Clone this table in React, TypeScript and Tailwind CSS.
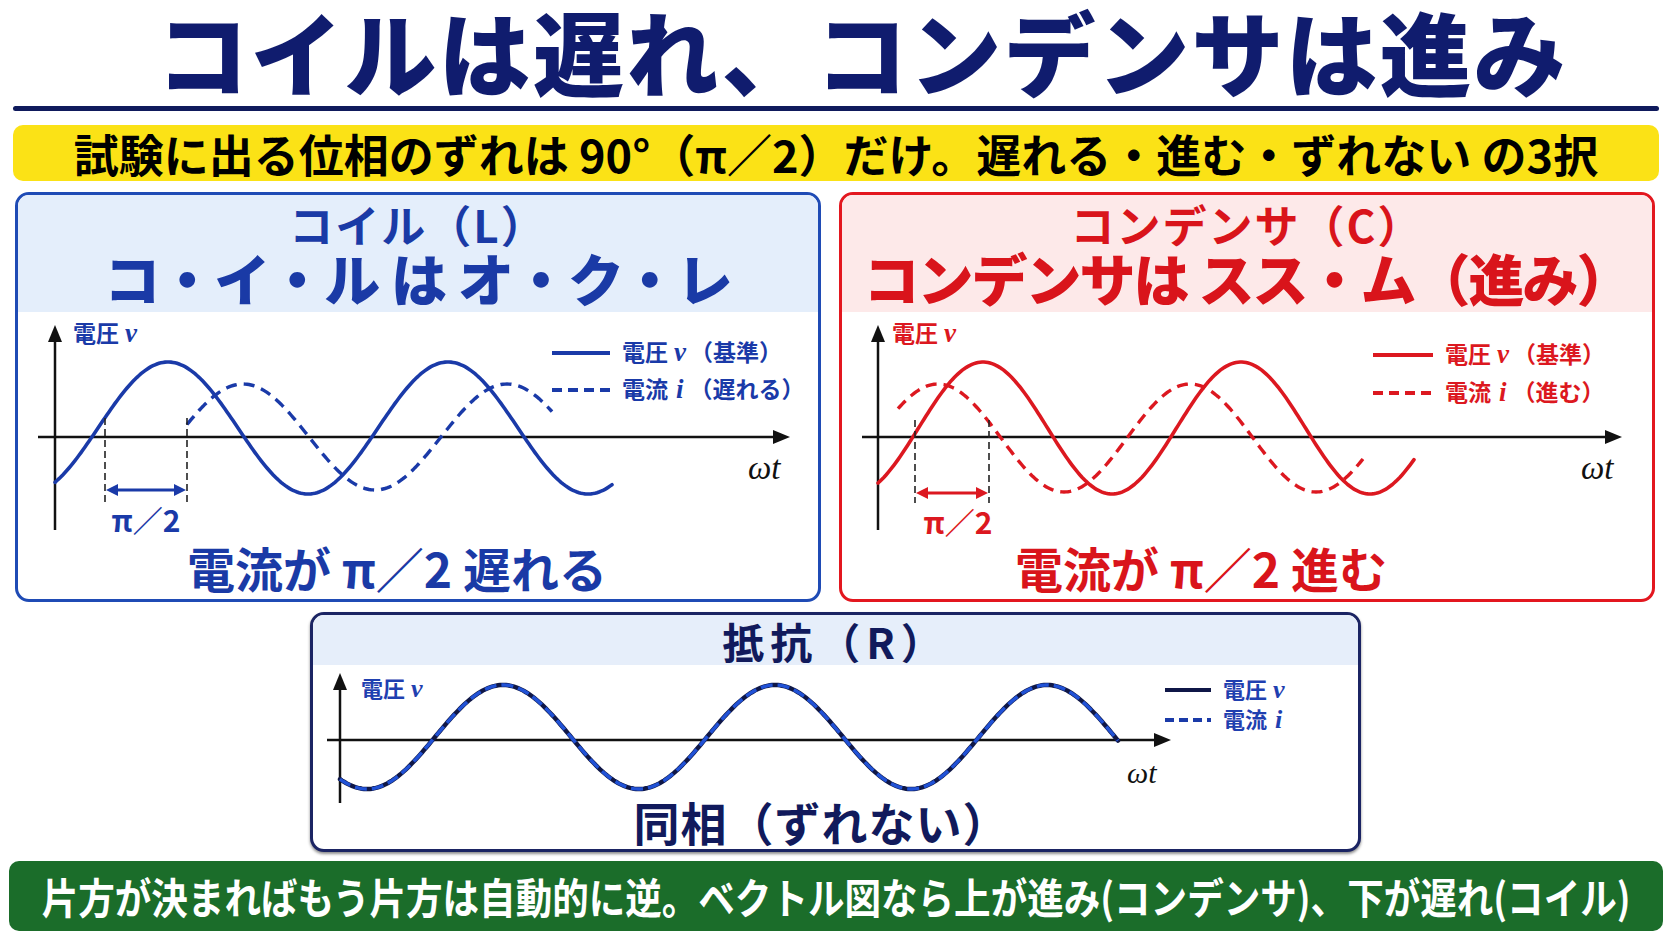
import React from 'react';

type Wave = { x0: number; x1: number; peak: number; period: number; yc: number; amp: number };

const wavePath = (w: Wave) => {
  const pts: string[] = [];
  for (let x = w.x0; x < w.x1; x += 2) {
    const y = w.yc - w.amp * Math.cos(((x - w.peak) / w.period) * 2 * Math.PI);
    pts.push(`${x.toFixed(1)} ${y.toFixed(1)}`);
  }
  const yEnd = w.yc - w.amp * Math.cos(((w.x1 - w.peak) / w.period) * 2 * Math.PI);
  pts.push(`${w.x1.toFixed(1)} ${yEnd.toFixed(1)}`);
  return 'M' + pts.join(' L');
};

const SERIF = "'Liberation Serif', serif";
const CJK = "'Noto Sans CJK JP', sans-serif";

interface ChartProps {
  width: number;
  height: number;
  color: string;
  axisY: number;
  axisX: number;
  yTop: number;
  yBottom: number;
  xStart: number;
  xTip: number;
  solid: Wave;
  dashed: Wave;
  marks?: { a: number; b: number; top: number; bottom: number; arrowY: number; labelX: number; labelY: number };
  labelX: number;
  labelY: number;
  labelSize: number;
  legendX: number;
  legendY1: number;
  legendY2: number;
  legendLen: number;
  legend1: string;
  legend2: string;
  omegaX: number;
  omegaY: number;
  omegaSize: number;
  overlay?: boolean;
}

const Chart: React.FC<ChartProps> = (p) => {
  const lw = p.legendLen;
  const vSize = p.labelSize + 4;
  return (
    <svg width={p.width} height={p.height} className="block">
      {/* axes */}
      <line x1={p.xStart} y1={p.axisY} x2={p.xTip - 12} y2={p.axisY} stroke="#111" strokeWidth={2.5} />
      <polygon points={`${p.xTip},${p.axisY} ${p.xTip - 17},${p.axisY - 7} ${p.xTip - 17},${p.axisY + 7}`} fill="#111" />
      <line x1={p.axisX} y1={p.yTop + 12} x2={p.axisX} y2={p.yBottom} stroke="#111" strokeWidth={2.5} />
      <polygon points={`${p.axisX},${p.yTop} ${p.axisX - 7},${p.yTop + 17} ${p.axisX + 7},${p.yTop + 17}`} fill="#111" />

      {/* waves */}
      {p.overlay ? (
        <>
          <path d={wavePath(p.solid)} fill="none" stroke="#0f1747" strokeWidth={4.5} strokeLinecap="round" />
          <path d={wavePath(p.dashed)} fill="none" stroke="#2152d6" strokeWidth={3.4} strokeDasharray="12 5" />
        </>
      ) : (
        <>
          <path d={wavePath(p.solid)} fill="none" stroke={p.color} strokeWidth={3.6} strokeLinecap="round" />
          <path d={wavePath(p.dashed)} fill="none" stroke={p.color} strokeWidth={3.4} strokeDasharray="11 7" />
        </>
      )}

      {/* phase marker */}
      {p.marks && (
        <>
          <line x1={p.marks.a} y1={p.marks.top} x2={p.marks.a} y2={p.marks.bottom} stroke="#222" strokeWidth={1.6} strokeDasharray="7 4" />
          <line x1={p.marks.b} y1={p.marks.top} x2={p.marks.b} y2={p.marks.bottom} stroke="#222" strokeWidth={1.6} strokeDasharray="7 4" />
          <line x1={p.marks.a + 8} y1={p.marks.arrowY} x2={p.marks.b - 8} y2={p.marks.arrowY} stroke={p.color} strokeWidth={3.2} />
          <polygon
            points={`${p.marks.a + 1},${p.marks.arrowY} ${p.marks.a + 13},${p.marks.arrowY - 6} ${p.marks.a + 13},${p.marks.arrowY + 6}`}
            fill={p.color}
          />
          <polygon
            points={`${p.marks.b - 1},${p.marks.arrowY} ${p.marks.b - 13},${p.marks.arrowY - 6} ${p.marks.b - 13},${p.marks.arrowY + 6}`}
            fill={p.color}
          />
          <text x={p.marks.labelX} y={p.marks.labelY} textAnchor="middle" fontFamily={CJK} fontWeight={700} fontSize={30} fill={p.color}>
            π／2
          </text>
        </>
      )}

      {/* axis label */}
      <text x={p.labelX} y={p.labelY} fontFamily={CJK} fontWeight={700} fontSize={p.labelSize} fill={p.color}>
        電圧
        <tspan fontFamily={SERIF} fontStyle="italic" fontWeight={700} fontSize={vSize} dx={6}>
          v
        </tspan>
      </text>

      {/* legend */}
      <line x1={p.legendX} y1={p.legendY1} x2={p.legendX + lw} y2={p.legendY1} stroke={p.overlay ? '#0f1747' : p.color} strokeWidth={4} />
      <line
        x1={p.legendX}
        y1={p.legendY2}
        x2={p.legendX + lw}
        y2={p.legendY2}
        stroke={p.overlay ? '#1a3aa8' : p.color}
        strokeWidth={4}
        strokeDasharray={p.overlay ? '9 5' : '10 6'}
      />
      <text x={p.legendX + lw + 12} y={p.legendY1 + 8} fontFamily={CJK} fontWeight={700} fontSize={p.labelSize} fill={p.color}>
        電圧
        <tspan fontFamily={SERIF} fontStyle="italic" fontWeight={700} fontSize={vSize} dx={6}>
          v
        </tspan>
        {p.legend1 && <tspan dx={4}>{p.legend1}</tspan>}
      </text>
      <text x={p.legendX + lw + 12} y={p.legendY2 + 8} fontFamily={CJK} fontWeight={700} fontSize={p.labelSize} fill={p.color}>
        電流
        <tspan fontFamily={SERIF} fontStyle="italic" fontWeight={700} fontSize={vSize} dx={8}>
          i
        </tspan>
        {p.legend2 && <tspan dx={6}>{p.legend2}</tspan>}
      </text>

      {/* omega t */}
      <text x={p.omegaX} y={p.omegaY} fontFamily={SERIF} fontStyle="italic" fontSize={p.omegaSize} fill="#111">
        ωt
      </text>
    </svg>
  );
};

const App: React.FC = () => {
  return (
    <div className="w-[1672px] h-[941px] overflow-hidden bg-white font-['Noto_Sans_CJK_JP',sans-serif]">
      {/* Title */}
      <h1 className="pt-[4px] pl-[52px] text-center text-[92px] leading-[92px] font-black tracking-[2px] text-[#101c6e]">
        コイルは遅れ、コンデンサは進み
      </h1>
      <div className="mx-[13px] mt-[10px] h-[5px] rounded-full bg-[#0f1a5c]" />

      {/* Yellow banner */}
      <div className="mx-[13px] mt-[14px] flex h-[56px] items-center justify-center rounded-[10px] bg-[#fbe216] text-[45px] font-bold leading-none text-black">
        試験に出る位相のずれは 90°（π／2）だけ。遅れる・進む・ずれない の3択
      </div>

      {/* Coil / capacitor cards */}
      <div className="mt-[11px] flex gap-[18px] px-[15px]">
        <div className="flex h-[410px] w-[806px] flex-col rounded-[14px] border-[3px] border-[#1f4bb5] bg-white">
          <div className="flex h-[117px] flex-col items-center rounded-t-[11px] bg-[#e4eefb] pt-[7px] text-[#1a3aa6]">
            <div className="text-[44px] font-bold leading-[45px] tracking-[2px]">コイル（L）</div>
            <div className="mt-[1px] text-[56px] font-black leading-[58px] tracking-[-1px]">コ・イ・ル は オ・ク・レ</div>
          </div>
          <Chart
            width={800}
            height={230}
            color="#1a3aa8"
            axisY={125}
            axisX={37}
            yTop={13}
            yBottom={218}
            xStart={20}
            xTip={772}
            solid={{ x0: 37, x1: 594, peak: 150, period: 280, yc: 116, amp: 66 }}
            dashed={{ x0: 169, x1: 534, peak: 225, period: 264, yc: 125, amp: 53 }}
            marks={{ a: 87, b: 169, top: 106, bottom: 190, arrowY: 178, labelX: 128, labelY: 220 }}
            labelX={55}
            labelY={30}
            labelSize={23}
            legendX={534}
            legendY1={41}
            legendY2={78}
            legendLen={58}
            legend1="（基準）"
            legend2="（遅れる）"
            omegaX={730}
            omegaY={167}
            omegaSize={33}
          />
          <div className="pr-[42px] text-center text-[48px] font-bold leading-[50px] text-[#1a3aa6]">電流が π／2 遅れる</div>
        </div>

        <div className="flex h-[410px] w-[816px] flex-col rounded-[14px] border-[3px] border-[#e3171f] bg-white">
          <div className="flex h-[117px] flex-col items-center rounded-t-[11px] bg-[#fde9e9] pt-[7px] text-[#d9141b]">
            <div className="text-[44px] font-bold leading-[45px] tracking-[2px]">コンデンサ（C）</div>
            <div className="mt-[1px] text-[56px] font-black leading-[58px] tracking-[-2px]">コンデンサは スス・ム（進み）</div>
          </div>
          <Chart
            width={810}
            height={230}
            color="#dc1820"
            axisY={125}
            axisX={36}
            yTop={13}
            yBottom={218}
            xStart={20}
            xTip={780}
            solid={{ x0: 36, x1: 572, peak: 141, period: 258, yc: 116, amp: 66 }}
            dashed={{ x0: 56, x1: 521, peak: 96, period: 252, yc: 126, amp: 54 }}
            marks={{ a: 73, b: 147, top: 108, bottom: 191, arrowY: 181, labelX: 116, labelY: 222 }}
            labelX={50}
            labelY={30}
            labelSize={23}
            legendX={531}
            legendY1={43}
            legendY2={81}
            legendLen={60}
            legend1="（基準）"
            legend2="（進む）"
            omegaX={739}
            omegaY={167}
            omegaSize={33}
          />
          <div className="pr-[92px] text-center text-[48px] font-bold leading-[50px] text-[#d9141b]">電流が π／2 進む</div>
        </div>
      </div>

      {/* Resistor card */}
      <div className="ml-[310px] mt-[10px] flex h-[240px] w-[1051px] flex-col rounded-[14px] border-[3px] border-[#1b2463] bg-white shadow-[0_2px_3px_rgba(0,0,0,0.45)]">
        <div className="flex h-[50px] items-center justify-center rounded-t-[11px] bg-[#e6eefa] pt-[2px] text-[42px] font-bold leading-none tracking-[6px] text-[#111a5c]">
          抵抗（R）
        </div>
        <Chart
          width={1045}
          height={140}
          color="#1f40b0"
          axisY={75}
          axisX={27}
          yTop={8}
          yBottom={138}
          xStart={14}
          xTip={858}
          solid={{ x0: 27, x1: 805, peak: 190, period: 272, yc: 72, amp: 52 }}
          dashed={{ x0: 27, x1: 805, peak: 190, period: 272, yc: 72, amp: 52 }}
          labelX={48}
          labelY={32}
          labelSize={22}
          legendX={852}
          legendY1={25}
          legendY2={55}
          legendLen={46}
          legend1=""
          legend2=""
          omegaX={814}
          omegaY={118}
          omegaSize={30}
          overlay
        />
        <div className="-mt-[8px] pr-[28px] text-center text-[46px] font-bold leading-[48px] tracking-[1px] text-[#111a5c]">同相（ずれない）</div>
      </div>

      {/* Green footer */}
      <div className="mx-[9px] mt-[9px] flex h-[70px] items-center justify-center overflow-hidden rounded-[10px] bg-[#1b6d2a]">
        <span className="inline-block shrink-0 origin-center scale-x-[0.87] whitespace-nowrap text-[42px] font-bold leading-none text-white">
          片方が決まればもう片方は自動的に逆。ベクトル図なら上が進み(コンデンサ)、下が遅れ(コイル)
        </span>
      </div>
    </div>
  );
};

export default App;
